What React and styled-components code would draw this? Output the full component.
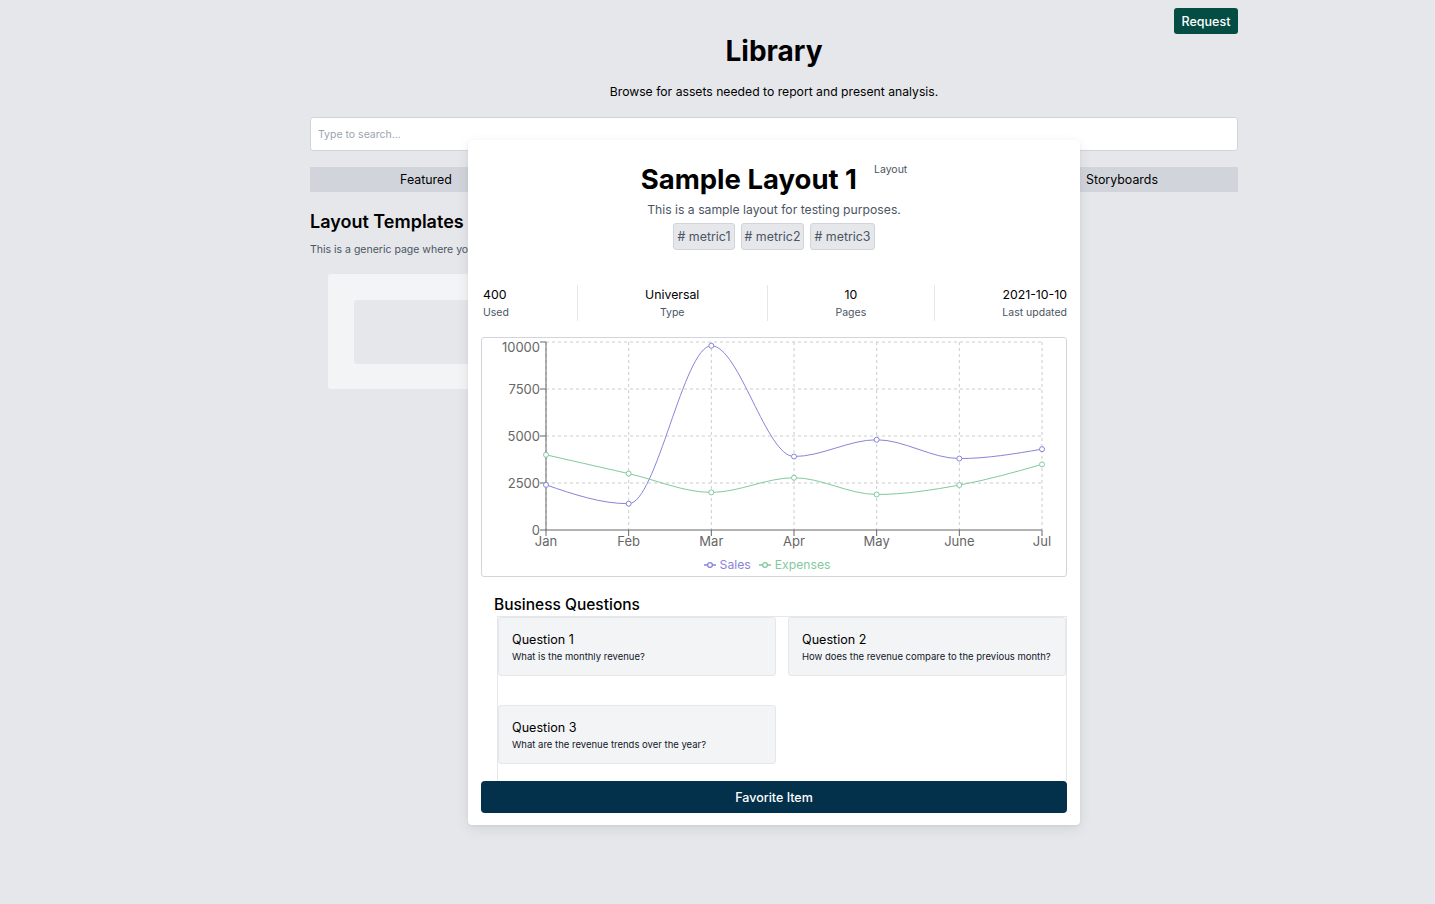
import styled, { createGlobalStyle } from "styled-components";

const GlobalStyle = createGlobalStyle`
  * { box-sizing: border-box; }
  body {
    margin: 0;
    background: #e5e7eb;
    font-family: Inter, "Noto Sans", "Liberation Sans", sans-serif;
    color: #111827;
  }
`;

const sales = [2400, 1398, 9800, 3908, 4800, 3800, 4300];
const expenses = [4000, 3000, 2000, 2780, 1890, 2390, 3490];
const months = ["Jan", "Feb", "Mar", "Apr", "May", "June", "Jul"];
const ticks = [0, 2500, 5000, 7500, 10000];

const plot = { left: 64, right: 560, top: 4, bottom: 192 };
const xAt = (i) => plot.left + ((plot.right - plot.left) / 6) * i;
const yAt = (v) => plot.bottom - (v / 10000) * (plot.bottom - plot.top);

// d3 curveMonotoneX, same as recharts "monotone"
const sign = (x) => (x < 0 ? -1 : 1);
const slope3 = (x0, y0, x1, y1, x2, y2) => {
  const h0 = x1 - x0;
  const h1 = x2 - x1;
  const s0 = (y1 - y0) / h0;
  const s1 = (y2 - y1) / h1;
  const p = (s0 * h1 + s1 * h0) / (h0 + h1);
  return (sign(s0) + sign(s1)) * Math.min(Math.abs(s0), Math.abs(s1), 0.5 * Math.abs(p)) || 0;
};
const monotonePath = (pts) => {
  const n = pts.length;
  const t = new Array(n);
  for (let i = 1; i < n - 1; i++) {
    t[i] = slope3(pts[i - 1][0], pts[i - 1][1], pts[i][0], pts[i][1], pts[i + 1][0], pts[i + 1][1]);
  }
  const h0 = pts[1][0] - pts[0][0];
  t[0] = (3 * (pts[1][1] - pts[0][1]) / h0 - t[1]) / 2;
  const hn = pts[n - 1][0] - pts[n - 2][0];
  t[n - 1] = (3 * (pts[n - 1][1] - pts[n - 2][1]) / hn - t[n - 2]) / 2;
  let d = `M${pts[0][0]},${pts[0][1]}`;
  for (let i = 0; i < n - 1; i++) {
    const dx = (pts[i + 1][0] - pts[i][0]) / 3;
    d += `C${pts[i][0] + dx},${pts[i][1] + dx * t[i]},${pts[i + 1][0] - dx},${pts[i + 1][1] - dx * t[i + 1]},${pts[i + 1][0]},${pts[i + 1][1]}`;
  }
  return d;
};

const series = [
  { name: "Sales", color: "#8884d8", data: sales },
  { name: "Expenses", color: "#82ca9d", data: expenses },
];

const stats = [
  { value: "400", label: "Used", align: "left" },
  { value: "Universal", label: "Type", align: "center" },
  { value: "10", label: "Pages", align: "center" },
  { value: "2021-10-10", label: "Last updated", align: "right" },
];

const questions = [
  { title: "Question 1", text: "What is the monthly revenue?" },
  { title: "Question 2", text: "How does the revenue compare to the previous month?" },
  { title: "Question 3", text: "What are the revenue trends over the year?" },
];

const LineChart = () => (
  <ChartSvg width="584" height="217">
    <g stroke="#ccc" strokeDasharray="3 3" fill="none">
      {ticks.slice(1).map((v) => (
        <line key={v} x1={plot.left} x2={plot.right} y1={yAt(v)} y2={yAt(v)} />
      ))}
      {months.map((m, i) => (
        <line key={m} x1={xAt(i)} x2={xAt(i)} y1={plot.top} y2={plot.bottom} />
      ))}
    </g>
    <g stroke="#666" fill="none">
      <line x1={plot.left} x2={plot.left} y1={plot.top} y2={plot.bottom} />
      <line x1={plot.left} x2={plot.right} y1={plot.bottom} y2={plot.bottom} />
      {ticks.map((v) => (
        <line key={v} x1={plot.left - 6} x2={plot.left} y1={yAt(v)} y2={yAt(v)} />
      ))}
      {months.map((m, i) => (
        <line key={m} x1={xAt(i)} x2={xAt(i)} y1={plot.bottom} y2={plot.bottom + 6} />
      ))}
    </g>
    <g fill="#666" fontSize="13">
      {ticks.map((v) => (
        <text key={v} x={plot.left - 6} y={v === 10000 ? 14 : yAt(v) + 5} textAnchor="end">
          {v}
        </text>
      ))}
      {months.map((m, i) => (
        <text key={m} x={xAt(i)} y={plot.bottom + 16} textAnchor="middle">
          {m}
        </text>
      ))}
    </g>
    {series.map((s) => {
      const pts = s.data.map((v, i) => [xAt(i), yAt(v)]);
      return (
        <g key={s.name}>
          <path d={monotonePath(pts)} fill="none" stroke={s.color} strokeWidth="1" />
          {pts.map(([x, y], i) => (
            <circle key={i} cx={x} cy={y} r="2.5" fill="#fff" stroke={s.color} />
          ))}
        </g>
      );
    })}
  </ChartSvg>
);

const LegendIcon = ({ color }) => (
  <svg width="12" height="8" viewBox="0 0 12 8">
    <line x1="0" y1="4" x2="12" y2="4" stroke={color} strokeWidth="1.5" />
    <circle cx="6" cy="4" r="2.4" fill="#fff" stroke={color} strokeWidth="1.3" />
  </svg>
);

const App = () => {
  return (
    <>
      <GlobalStyle />
      <Page>
        <Container>
          <TopBar>
            <RequestButton>Request</RequestButton>
          </TopBar>
          <Title>Library</Title>
          <Subtitle>Browse for assets needed to report and present analysis.</Subtitle>
          <Search placeholder="Type to search..." />
          <Tabs>
            <Tab>Featured</Tab>
            <Tab>Layouts</Tab>
            <Tab>Metrics</Tab>
            <Tab>Storyboards</Tab>
          </Tabs>
          <SectionTitle>Layout Templates</SectionTitle>
          <SectionText>This is a generic page where you can browse layout templates.</SectionText>
          <TemplateCard>
            <TemplateThumb />
          </TemplateCard>
        </Container>

        <Modal>
          <ModalHeader>
            <TitleRow>
              <ModalTitle>Sample Layout 1</ModalTitle>
              <Kind>Layout</Kind>
            </TitleRow>
            <ModalDesc>This is a sample layout for testing purposes.</ModalDesc>
            <Tags>
              <Tag># metric1</Tag>
              <Tag># metric2</Tag>
              <Tag># metric3</Tag>
            </Tags>
          </ModalHeader>

          <Stats>
            {stats.map((s, i) => [
              i > 0 && <Divider key={`d${i}`} />,
              <Stat key={s.label} $align={s.align}>
                <StatValue>{s.value}</StatValue>
                <StatLabel>{s.label}</StatLabel>
              </Stat>,
            ])}
          </Stats>

          <ChartBox>
            <LineChart />
            <Legend>
              {series.map((s) => (
                <LegendItem key={s.name} $color={s.color}>
                  <LegendIcon color={s.color} />
                  {s.name}
                </LegendItem>
              ))}
            </Legend>
          </ChartBox>

          <QuestionsTitle>Business Questions</QuestionsTitle>
          <QuestionGrid>
            {questions.map((q) => (
              <QuestionCard key={q.title}>
                <QuestionTitle>{q.title}</QuestionTitle>
                <QuestionText>{q.text}</QuestionText>
              </QuestionCard>
            ))}
          </QuestionGrid>

          <FavoriteButton>Favorite Item</FavoriteButton>
        </Modal>
      </Page>
    </>
  );
};

const Page = styled.div`
  position: relative;
  min-height: 904px;
  padding-left: 113px;
`;

const Container = styled.div`
  width: 928px;
  margin: 0 auto;
  display: flex;
  flex-direction: column;
`;

const TopBar = styled.div`
  display: flex;
  justify-content: flex-end;
  padding-top: 8px;
`;

const RequestButton = styled.button`
  height: 26px;
  width: 64px;
  border: none;
  border-radius: 3px;
  background: #034d44;
  color: #fff;
  font-family: inherit;
  font-size: 12.5px;
  font-weight: 500;
  cursor: pointer;
`;

const Title = styled.h1`
  margin: 0;
  text-align: center;
  font-size: 28px;
  font-weight: 700;
  line-height: 34px;
  color: #000;
`;

const Subtitle = styled.p`
  margin: 14px 0 0;
  text-align: center;
  font-size: 12.2px;
  line-height: 20px;
  color: #000;
`;

const Search = styled.input`
  margin-top: 15px;
  height: 34px;
  border: 1px solid #d1d5db;
  border-radius: 3px;
  background: #fff;
  padding: 0 7px;
  font-family: inherit;
  font-size: 10.5px;
  &::placeholder {
    color: #9ca3af;
  }
`;

const Tabs = styled.div`
  margin-top: 16px;
  display: grid;
  grid-template-columns: repeat(4, 1fr);
  height: 25px;
  background: #d1d5db;
`;

const Tab = styled.div`
  display: flex;
  align-items: center;
  justify-content: center;
  font-size: 12.4px;
  color: #000;
`;

const SectionTitle = styled.h2`
  margin: 16px 0 0;
  font-size: 18px;
  font-weight: 600;
  line-height: 28px;
  color: #000;
`;

const SectionText = styled.p`
  margin: 6px 0 0;
  font-size: 10.5px;
  line-height: 16px;
  color: #4b5563;
`;

const TemplateCard = styled.div`
  margin: 16px 0 0 18px;
  width: 300px;
  height: 115px;
  padding: 26px;
  background: #f3f4f6;
  border-radius: 3px;
`;

const TemplateThumb = styled.div`
  height: 64px;
  background: #e5e7eb;
  border-radius: 3px;
`;

const Modal = styled.div`
  position: absolute;
  top: 140px;
  left: 468px;
  width: 612px;
  background: #fff;
  border-radius: 4px;
  box-shadow: 0 4px 14px rgba(0, 0, 0, 0.08), 0 1px 3px rgba(0, 0, 0, 0.06);
  padding: 0 13px 12px;
  display: flex;
  flex-direction: column;
`;

const ModalHeader = styled.div`
  padding-top: 23px;
  display: flex;
  flex-direction: column;
  align-items: center;
`;

const TitleRow = styled.div`
  display: flex;
  align-items: flex-start;
  gap: 17px;
`;

const ModalTitle = styled.h2`
  margin: 0;
  font-size: 27.5px;
  font-weight: 700;
  line-height: 32px;
  color: #000;
`;

const Kind = styled.span`
  font-size: 10.5px;
  line-height: 14px;
  color: #4b5563;
`;

const ModalDesc = styled.p`
  margin: 6px 0 0;
  font-size: 12.2px;
  line-height: 18px;
  color: #4b5563;
`;

const Tags = styled.div`
  margin-top: 4px;
  display: flex;
  gap: 6px;
`;

const Tag = styled.span`
  height: 27px;
  display: flex;
  align-items: center;
  padding: 0 3px;
  font-size: 12.4px;
  color: #4b5563;
  background: #e5e7eb;
  border: 1px solid #d1d5db;
  border-radius: 3px;
`;

const Stats = styled.div`
  margin-top: 35px;
  height: 36px;
  display: flex;
  justify-content: space-between;
  align-items: stretch;
  padding-left: 2px;
`;

const Divider = styled.div`
  width: 1px;
  background: #e5e7eb;
`;

const Stat = styled.div`
  display: flex;
  flex-direction: column;
  justify-content: center;
  text-align: ${({ $align }) => $align};
`;

const StatValue = styled.div`
  font-size: 12.3px;
  line-height: 18px;
  color: #000;
`;

const StatLabel = styled.div`
  margin-top: 1px;
  font-size: 10.5px;
  line-height: 16px;
  color: #4b5563;
`;

const ChartBox = styled.div`
  margin-top: 16px;
  height: 240px;
  border: 1px solid #d1d5db;
  border-radius: 3px;
  display: flex;
  flex-direction: column;
`;

const ChartSvg = styled.svg`
  display: block;
  font-family: Inter, "Noto Sans", sans-serif;
`;

const Legend = styled.div`
  display: flex;
  justify-content: center;
  gap: 8px;
  margin-top: 2px;
  padding-right: 14px;
`;

const LegendItem = styled.span`
  display: flex;
  align-items: center;
  gap: 4px;
  font-size: 12.2px;
  line-height: 16px;
  color: ${({ $color }) => $color};
`;

const QuestionsTitle = styled.h3`
  margin: 18px 0 0;
  padding-left: 13px;
  font-size: 15.5px;
  font-weight: 500;
  line-height: 20px;
  color: #000;
`;

const QuestionGrid = styled.div`
  margin: 1px 0 0 16px;
  border: 1px solid #e5e7eb;
  border-bottom: none;
  display: grid;
  grid-template-columns: 1fr 1fr;
  column-gap: 12px;
  row-gap: 29px;
  padding-bottom: 17px;
`;

const QuestionCard = styled.div`
  height: 59px;
  padding: 14px 13px 0;
  background: #f3f4f6;
  border: 1px solid #e5e7eb;
  border-radius: 3px;
`;

const QuestionTitle = styled.div`
  font-size: 12.6px;
  font-weight: 400;
  line-height: 16px;
  color: #000;
`;

const QuestionText = styled.div`
  margin-top: 2px;
  font-size: 9.5px;
  line-height: 14px;
  color: #111827;
`;

const FavoriteButton = styled.button`
  height: 32px;
  border: none;
  border-radius: 4px;
  background: #03314b;
  color: #fff;
  font-family: inherit;
  font-size: 12.5px;
  font-weight: 500;
  cursor: pointer;
`;

export default App;
